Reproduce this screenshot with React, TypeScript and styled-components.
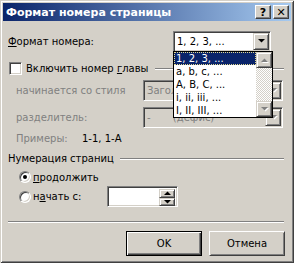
import React from "react";
import styled, { createGlobalStyle } from "styled-components";

const Global = createGlobalStyle`
  html, body { margin: 0; padding: 0; background: #d4d0c8; }
  body { font-family: "DejaVu Sans", Tahoma, sans-serif; font-size: 10px; color: #000; }
`;

const face = "#d4d0c8";

const Window = styled.div`
  width: 294px;
  height: 263px;
  box-sizing: border-box;
  padding: 3px;
  background: ${face};
  box-shadow: inset 1px 1px ${face}, inset -1px -1px #404040, inset 2px 2px #fff, inset -2px -2px #808080;
  display: flex;
  flex-direction: column;
`;

const TitleBar = styled.div`
  height: 18px;
  flex: none;
  display: flex;
  align-items: center;
  padding: 0 2px 0 3px;
  background: linear-gradient(to right, #0a246a, #a6caf0);
`;

const Title = styled.div`
  flex: 1;
  color: #fff;
  font-weight: bold;
  font-size: 11px;
  white-space: nowrap;
`;

const CapButton = styled.div`
  width: 16px;
  height: 14px;
  box-sizing: border-box;
  margin-left: ${(p: { $gap?: number }) => p.$gap ?? 0}px;
  background: ${face};
  border: 1px solid;
  border-color: #fff #404040 #404040 #fff;
  box-shadow: inset -1px -1px #808080;
  display: flex;
  align-items: center;
  justify-content: center;
  font-weight: bold;
  font-size: 11px;
  line-height: 1;
`;

const Body = styled.div`
  flex: 1;
  display: flex;
  flex-direction: column;
  padding: 0 6px 0 5px;
`;

const Row = styled.div<{ $mt: number; $h: number; $pl?: number }>`
  display: flex;
  align-items: center;
  margin-top: ${(p) => p.$mt}px;
  height: ${(p) => p.$h}px;
  padding-left: ${(p) => p.$pl ?? 0}px;
  white-space: nowrap;
`;

const Label = styled.span<{ $w?: number; $dim?: boolean }>`
  width: ${(p) => (p.$w ? `${p.$w}px` : "auto")};
  flex: none;
  color: ${(p) => (p.$dim ? "#808080" : "#000")};
`;

const Combo = styled.div<{ $w: number; $disabled?: boolean }>`
  position: relative;
  width: ${(p) => p.$w}px;
  height: 21px;
  box-sizing: border-box;
  border: 1px solid;
  border-color: #808080 #fff #fff #808080;
  box-shadow: inset 1px 1px #404040, inset -1px -1px ${face};
  background: ${(p) => (p.$disabled ? face : "#fff")};
  color: ${(p) => (p.$disabled ? "#808080" : "#000")};
  display: flex;
  align-items: center;
  padding: 1px 1px 1px 3px;
`;

const ComboText = styled.span`
  flex: 1;
  overflow: hidden;
`;

const ArrowBtn = styled.div<{ $h?: number }>`
  width: 16px;
  height: ${(p) => p.$h ?? 17}px;
  box-sizing: border-box;
  flex: none;
  background: ${face};
  border: 1px solid;
  border-color: ${face} #404040 #404040 ${face};
  box-shadow: inset 1px 1px #fff, inset -1px -1px #808080;
  display: flex;
  align-items: center;
  justify-content: center;
`;

const Arrow = ({ up, dim }: { up?: boolean; dim?: boolean }) => (
  <svg width="7" height="5" viewBox="0 0 7 5" style={{ overflow: "visible" }}>
    {dim && <path d={up ? "M1 5h7L4.5 1.5z" : "M1 1h7L4.5 4.5z"} fill="#fff" />}
    <path d={up ? "M0 4h7L3.5 0.5z" : "M0 0h7L3.5 3.5z"} fill={dim ? "#808080" : "#000"} />
  </svg>
);

const ListBox = styled.div`
  position: absolute;
  top: 19px;
  left: -1px;
  width: 100px;
  height: 67px;
  box-sizing: border-box;
  border: 1px solid #000;
  background: #fff;
  color: #000;
  display: flex;
  z-index: 2;
`;

const Items = styled.div`
  flex: 1;
  display: flex;
  flex-direction: column;
`;

const Item = styled.div<{ $sel?: boolean }>`
  height: 13px;
  line-height: 13px;
  padding-left: 2px;
  background: ${(p) => (p.$sel ? "#0a246a" : "transparent")};
  color: ${(p) => (p.$sel ? "#fff" : "#000")};
  outline: ${(p) => (p.$sel ? "1px dotted #e0d890" : "none")};
  outline-offset: -1px;
`;

const ScrollBar = styled.div`
  width: 16px;
  display: flex;
  flex-direction: column;
`;

const Track = styled.div`
  flex: 1;
  background: repeating-conic-gradient(#fff 0 25%, ${face} 0 50%) 0 0 / 2px 2px;
`;

const CheckBox = styled.div`
  width: 13px;
  height: 13px;
  box-sizing: border-box;
  margin-left: 1px;
  flex: none;
  background: #fff;
  border: 1px solid;
  border-color: #808080 #fff #fff #808080;
  box-shadow: inset 1px 1px #404040, inset -1px -1px ${face};
`;

const GroupLine = styled.div<{ $ml: number }>`
  flex: 1;
  height: 2px;
  margin: 1px 1px 0 ${(p) => p.$ml}px;
  border-top: 1px solid #808080;
  border-bottom: 1px solid #fff;
  box-sizing: border-box;
`;

const Radio = styled.div<{ $on?: boolean }>`
  width: 12px;
  height: 12px;
  box-sizing: border-box;
  flex: none;
  margin: 0 2px 0 11px;
  border-radius: 50%;
  background: #fff;
  border: 1px solid;
  border-color: #808080 #fff #fff #808080;
  box-shadow: inset 1px 1px #404040, inset -1px -1px ${face};
  display: flex;
  align-items: center;
  justify-content: center;
  &::after {
    content: "";
    display: ${(p) => (p.$on ? "block" : "none")};
    width: 4px;
    height: 4px;
    border-radius: 50%;
    background: #000;
  }
`;

const RadioCell = styled.div`
  width: 99px;
  display: flex;
  align-items: center;
`;

const Spin = styled.div`
  width: 71px;
  height: 21px;
  box-sizing: border-box;
  border: 1px solid;
  border-color: #808080 #fff #fff #808080;
  box-shadow: inset 1px 1px #404040, inset -1px -1px ${face};
  background: #fff;
  display: flex;
  justify-content: flex-end;
  padding: 2px 2px 2px 0;
`;

const SpinButtons = styled.div`
  display: flex;
  flex-direction: column;
`;

const Separator = styled.div`
  margin: 14px 1px 0 0;
  height: 2px;
  box-sizing: border-box;
  border-top: 1px solid #808080;
  border-bottom: 1px solid #fff;
`;

const Buttons = styled.div`
  display: flex;
  justify-content: flex-end;
  gap: 7px;
  margin-top: 8px;
`;

const PushButton = styled.div<{ $default?: boolean }>`
  width: 76px;
  height: 25px;
  box-sizing: border-box;
  background: ${face};
  border: 1px solid;
  border-color: ${(p) => (p.$default ? "#000" : "#fff #404040 #404040 #fff")};
  box-shadow: ${(p) =>
    p.$default
      ? "inset 1px 1px #fff, inset -1px -1px #404040, inset -2px -2px #808080"
      : `inset 1px 1px ${face}, inset -1px -1px #808080`};
  display: flex;
  align-items: center;
  justify-content: center;
`;

const formats = ["1, 2, 3, ...", "a, b, c, ...", "A, B, C, ...", "i, ii, iii, ...", "I, II, III, ..."];

const App = () => {
  return (
    <>
      <Global />
      <Window>
        <TitleBar>
          <Title>Формат номера страницы</Title>
          <CapButton>?</CapButton>
          <CapButton $gap={2}>✕</CapButton>
        </TitleBar>
        <Body>
          <Row $mt={10} $h={21}>
            <Label $w={165}>
              <u>Ф</u>ормат номера:
            </Label>
            <Combo $w={98}>
              <ComboText>1, 2, 3, ...</ComboText>
              <ArrowBtn>
                <Arrow />
              </ArrowBtn>
              <ListBox>
                <Items>
                  {formats.map((f, i) => (
                    <Item key={f} $sel={i === 0}>
                      {f}
                    </Item>
                  ))}
                </Items>
                <ScrollBar>
                  <ArrowBtn $h={16}>
                    <Arrow up dim />
                  </ArrowBtn>
                  <Track />
                  <ArrowBtn $h={16}>
                    <Arrow dim />
                  </ArrowBtn>
                </ScrollBar>
              </ListBox>
            </Combo>
          </Row>

          <Row $mt={10} $h={13}>
            <CheckBox />
            <Label style={{ marginLeft: 4 }}>
              Включить номер <u>г</u>лавы
            </Label>
            <GroupLine $ml={7} />
          </Row>

          <Row $mt={5} $h={21} $pl={8}>
            <Label $w={127} $dim>
              начинается со стиля
            </Label>
            <Combo $w={140} $disabled>
              <ComboText>Заголовок 1</ComboText>
              <ArrowBtn>
                <Arrow dim />
              </ArrowBtn>
            </Combo>
          </Row>

          <Row $mt={6} $h={21} $pl={8}>
            <Label $w={127} $dim>
              разделитель:
            </Label>
            <Combo $w={140} $disabled>
              <ComboText>-&nbsp;&nbsp;&nbsp;&nbsp;&nbsp;&nbsp;&nbsp;(дефис)</ComboText>
              <ArrowBtn>
                <Arrow dim />
              </ArrowBtn>
            </Combo>
          </Row>

          <Row $mt={4} $h={13} $pl={8}>
            <Label $w={66} $dim>
              Примеры:
            </Label>
            <Label>1-1, 1-А</Label>
          </Row>

          <Row $mt={7} $h={13}>
            <Label>Нумерация страниц</Label>
            <GroupLine $ml={6} />
          </Row>

          <Row $mt={6} $h={12}>
            <Radio $on />
            <Label>
              <u>п</u>родолжить
            </Label>
          </Row>

          <Row $mt={3} $h={21}>
            <RadioCell>
              <Radio />
              <Label>
                н<u>а</u>чать с:
              </Label>
            </RadioCell>
            <Spin>
              <SpinButtons>
                <ArrowBtn $h={9}>
                  <Arrow up />
                </ArrowBtn>
                <ArrowBtn $h={8}>
                  <Arrow />
                </ArrowBtn>
              </SpinButtons>
            </Spin>
          </Row>

          <Separator />

          <Buttons>
            <PushButton $default>OK</PushButton>
            <PushButton>Отмена</PushButton>
          </Buttons>
        </Body>
      </Window>
    </>
  );
};

export default App;
